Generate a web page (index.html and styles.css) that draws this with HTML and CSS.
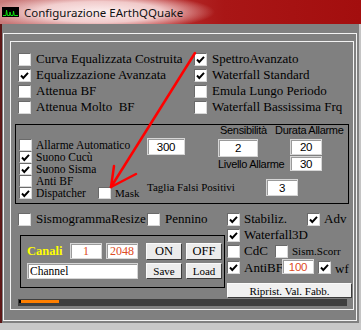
FILE: index.html
```html
<!DOCTYPE html>
<html lang="it">
<head>
  <meta charset="UTF-8">
  <meta name="viewport" content="width=device-width, initial-scale=1.0">
  <title>Configurazione EArthQQuake</title>
  <link rel="stylesheet" href="styles.css">
</head>
<body>
  <div class="window">
    <div class="titlebar">
      <svg class="app-icon" width="17" height="10" viewBox="0 0 17 10">
        <rect width="17" height="10" fill="#000"/>
        <polyline points="1,8.5 4,8.5 4.5,3 5.5,8.5 7.5,8.5 8,5 8.8,8.5 11,8.5 11.5,4 12.3,8.5 16,8.5" stroke="#10e010" stroke-width="1" fill="none"/>
      </svg>
      <span class="title">Configurazione EArthQQuake</span>
    </div>

    <div class="client">
      <div class="frame-outer">
        <div class="frame-inner">

          <!-- opzioni principali -->
          <div class="opts">
            <div class="chk"><span class="cb"></span>Curva Equalizzata Costruita</div>
            <div class="chk"><span class="cb on"><svg viewBox="0 0 11 11"><polyline points="2,5.5 4.3,8 9,2.8"/></svg></span>SpettroAvanzato</div>
            <div class="chk"><span class="cb on"><svg viewBox="0 0 11 11"><polyline points="2,5.5 4.3,8 9,2.8"/></svg></span>Equalizzazione Avanzata</div>
            <div class="chk"><span class="cb on"><svg viewBox="0 0 11 11"><polyline points="2,5.5 4.3,8 9,2.8"/></svg></span>Waterfall Standard</div>
            <div class="chk"><span class="cb"></span>Attenua BF</div>
            <div class="chk"><span class="cb"></span>Emula Lungo Periodo</div>
            <div class="chk"><span class="cb"></span>Attenua Molto&nbsp; BF</div>
            <div class="chk"><span class="cb"></span>Waterfall Bassissima Frq</div>
          </div>

          <!-- allarmi -->
          <div class="alarm">
            <div class="alarm-list">
              <div class="chk"><span class="cb"></span>Allarme Automatico</div>
              <div class="chk"><span class="cb on"><svg viewBox="0 0 11 11"><polyline points="2,5.5 4.3,8 9,2.8"/></svg></span>Suono Cucù</div>
              <div class="chk"><span class="cb on"><svg viewBox="0 0 11 11"><polyline points="2,5.5 4.3,8 9,2.8"/></svg></span>Suono Sisma</div>
              <div class="chk"><span class="cb"></span>Anti BF</div>
              <div class="chk">
                <span class="cb on"><svg viewBox="0 0 11 11"><polyline points="2,5.5 4.3,8 9,2.8"/></svg></span>
                <span class="dispatcher">Dispatcher</span>
                <span class="cb mask-cb"></span>
                <span class="mask">Mask</span>
              </div>
            </div>
            <div class="alarm-fields">
              <div class="af-row af-head">
                <span class="sens">Sensibilità</span>
                <span>Durata Allarme</span>
              </div>
              <div class="af-row af-main">
                <input class="field f300" type="text" value="300">
                <input class="field f2" type="text" value="2">
                <input class="field f20" type="text" value="20">
              </div>
              <div class="af-row af-liv">
                <span class="liv">Livello Allarme</span>
                <input class="field f30" type="text" value="30">
              </div>
              <div class="af-row af-taglia">
                <span class="taglia">Taglia Falsi Positivi</span>
                <input class="field f3" type="text" value="3">
              </div>
            </div>
          </div>

          <!-- parte bassa -->
          <div class="lower">
            <div class="lower-left">
              <div class="chk sismo">
                <span class="cb"></span>
                <span class="resize">SismogrammaResize</span>
                <span class="cb"></span>
                <span>Pennino</span>
              </div>
              <div class="canali">
                <div class="canali-row">
                  <span class="canali-lbl">Canali</span>
                  <input class="field red ch1" type="text" value="1">
                  <input class="field red ch2" type="text" value="2048">
                  <button class="btn on-btn">ON</button>
                  <button class="btn off-btn">OFF</button>
                </div>
                <div class="canali-row second">
                  <input class="field channel" type="text" value="Channel">
                  <button class="btn save-btn">Save</button>
                  <button class="btn load-btn">Load</button>
                </div>
              </div>
            </div>
            <div class="lower-right">
              <div class="chk">
                <span class="cb on"><svg viewBox="0 0 11 11"><polyline points="2,5.5 4.3,8 9,2.8"/></svg></span>
                <span class="stab">Stabiliz.</span>
                <span class="cb on"><svg viewBox="0 0 11 11"><polyline points="2,5.5 4.3,8 9,2.8"/></svg></span>
                <span>Adv</span>
              </div>
              <div class="chk">
                <span class="cb on"><svg viewBox="0 0 11 11"><polyline points="2,5.5 4.3,8 9,2.8"/></svg></span>
                <span>Waterfall3D</span>
              </div>
              <div class="chk">
                <span class="cb"></span>
                <span class="cdc">CdC</span>
                <span class="cb"></span>
                <span class="scorr">Sism.Scorr</span>
              </div>
              <div class="chk antibf-row">
                <span class="cb on"><svg viewBox="0 0 11 11"><polyline points="2,5.5 4.3,8 9,2.8"/></svg></span>
                <span class="antibf">AntiBF</span>
                <input class="field red f100" type="text" value="100">
                <span class="cb on"><svg viewBox="0 0 11 11"><polyline points="2,5.5 4.3,8 9,2.8"/></svg></span>
                <span>wf</span>
              </div>
              <button class="btn reset-btn">Riprist. Val. Fabb.</button>
            </div>
          </div>

          <div class="progress"><div class="progress-fill"></div></div>

        </div>
      </div>
    </div>

    <!-- freccia rossa sopra il form -->
    <svg class="arrow" width="361" height="330" viewBox="0 0 361 330">
      <g stroke="#ff0000" stroke-width="2.5" stroke-linecap="round" fill="none">
        <line x1="195" y1="53" x2="111" y2="187"/>
        <line x1="111" y1="187" x2="114" y2="166"/>
        <line x1="111" y1="187" x2="136" y2="174"/>
      </g>
    </svg>
  </div>
</body>
</html>
```

FILE: styles.css
```css
* {
  box-sizing: border-box;
}
body {
  margin: 0;
  width: 361px;
  height: 330px;
  overflow: hidden;
  background: #c8c8c8;
}
.window {
  position: relative;
  width: 361px;
  height: 330px;
  font-family: "Liberation Serif", "Times New Roman", serif;
  color: #000;
}

/* barra del titolo */
.titlebar {
  height: 24px;
  display: flex;
  align-items: center;
  gap: 5px;
  padding-left: 2px;
  background:
    radial-gradient(ellipse 115px 19px at 100px 12px, rgba(255, 246, 246, 0.96), rgba(250, 225, 225, 0.85) 55%, rgba(200, 60, 60, 0) 100%),
    linear-gradient(to right, #c87a7a, #b83030 45%, #a91616 62%, #a30e0e);
}
.app-icon {
  display: block;
}
.title {
  font-family: "Noto Sans", "Open Sans", sans-serif;
  font-size: 11.5px;
  color: #111;
}

/* area client */
.client {
  height: 299px;
  background: #808080;
  border-left: 2px solid #5c1616;
  border-right: 2px solid #c4c4c4;
  padding-top: 9px;
}
.frame-outer {
  margin-left: 1px;
  width: 354px;
  height: 288px;
  border: 1px solid #f2f2f2;
  padding: 7px 0 0 6px;
}
.frame-inner {
  width: 344px;
  height: 269px;
  border: 1px solid #f2f2f2;
}

/* checkbox */
.chk {
  display: flex;
  align-items: center;
  gap: 4px;
  white-space: nowrap;
}
.cb {
  flex: none;
  width: 13px;
  height: 13px;
  background: #fff;
  border: 1px solid;
  border-color: #6a6a6a #d8d8d8 #d8d8d8 #6a6a6a;
  display: flex;
  align-items: center;
  justify-content: center;
}
.cb svg {
  width: 11px;
  height: 11px;
  fill: none;
  stroke: #000;
  stroke-width: 1.9;
}

/* campi e pulsanti */
.field {
  margin: 0;
  padding: 0;
  border: 1px solid #d6d6d6;
  box-shadow: inset 1px 1px 0 #9a9a9a;
  background: #fff;
  text-align: center;
  font-family: "Liberation Sans", Arial, sans-serif;
  font-size: 11.5px;
  letter-spacing: -0.3px;
  color: #000;
  outline: none;
}
.field.red {
  color: #dd4c24;
}
.btn {
  margin: 0;
  padding: 0;
  background: #ececec;
  border: 1px solid;
  border-color: #fafafa #3c3c3c #3c3c3c #fafafa;
  font-family: "Liberation Serif", "Times New Roman", serif;
  font-size: 11px;
  color: #000;
}

/* opzioni principali */
.opts {
  margin: 9px 0 0 7px;
  display: grid;
  grid-template-columns: 176px auto;
  grid-auto-rows: 16px;
  font-size: 13px;
}
.opts .chk {
  gap: 5px;
}

/* gruppo allarmi */
.alarm {
  margin: 9px 0 0 4px;
  width: 334px;
  height: 80px;
  border: 1px solid #000;
  display: flex;
}
.alarm-list {
  width: 131px;
  padding: 14px 0 0 3px;
  font-size: 11.5px;
}
.alarm-list .chk {
  height: 12px;
}
.alarm-list .cb {
  height: 12px;
}
.dispatcher {
  width: 58px;
}
.mask {
  font-size: 11px;
}
.alarm-fields {
  width: 201px;
  font-family: "Liberation Sans", Arial, sans-serif;
  font-size: 11px;
  letter-spacing: -0.3px;
}
.af-row {
  display: flex;
  align-items: flex-start;
}
.af-head {
  height: 13px;
  line-height: 11px;
}
.sens {
  margin-left: 73px;
  width: 55px;
}
.af-main {
  height: 17px;
}
.f300 {
  width: 38px;
  height: 17px;
}
.f2 {
  margin: 1px 0 0 33px;
  width: 40px;
  height: 18px;
}
.f20 {
  margin: 1px 0 0 32px;
  width: 32px;
  height: 16px;
}
.af-liv {
  height: 17px;
}
.liv {
  margin-left: 71px;
  width: 72px;
  line-height: 17px;
  padding-top: 1px;
}
.f30 {
  margin-top: 1px;
  width: 32px;
  height: 15px;
}
.af-taglia {
  margin-top: 7px;
  height: 17px;
}
.taglia {
  width: 119px;
  line-height: 17px;
  font-family: "Liberation Serif", "Times New Roman", serif;
  letter-spacing: 0;
}
.f3 {
  width: 32px;
  height: 17px;
}

/* parte bassa */
.lower {
  margin-top: 7px;
  height: 87px;
  display: flex;
  font-size: 13px;
}
.lower-left {
  width: 216px;
}
.sismo {
  height: 16px;
  padding-left: 7px;
  gap: 5px;
}
.resize {
  width: 106px;
}
.canali {
  margin: 8px 0 0 9px;
  width: 205px;
  height: 53px;
  border: 1px solid #000;
  padding: 7px 0 0 6px;
}
.canali-row {
  display: flex;
  align-items: flex-start;
  height: 17px;
}
.canali-row.second {
  margin-top: 3px;
  height: 16px;
}
.canali-lbl {
  width: 43px;
  line-height: 17px;
  font-weight: bold;
  font-size: 12.5px;
  color: #ffff00;
}
.ch1,
.ch2 {
  width: 32px;
  height: 16px;
  font-family: "Liberation Serif", "Times New Roman", serif;
  font-size: 12px;
  letter-spacing: 0;
}
.ch2 {
  margin-left: 4px;
}
.on-btn,
.save-btn {
  margin-left: 8px;
}
.on-btn,
.off-btn {
  width: 36px;
  height: 17px;
  font-size: 12.5px;
}
.off-btn,
.load-btn {
  margin-left: 4px;
}
.save-btn,
.load-btn {
  width: 36px;
  height: 16px;
}
.channel {
  width: 111px;
  height: 16px;
  text-align: left;
  padding-left: 2px;
  font-family: "Liberation Serif", "Times New Roman", serif;
  font-size: 11.5px;
  letter-spacing: 0;
}
.lower-right {
  width: 126px;
}
.lower-right .chk {
  height: 16px;
}
.stab {
  width: 59px;
}
.cdc {
  width: 27px;
}
.scorr {
  font-size: 11px;
}
.antibf-row {
  align-items: flex-start;
}
.antibf-row .cb,
.antibf-row span {
  margin-top: 2px;
}
.antibf {
  width: 38px;
  margin-right: -4px;
  line-height: 13px;
}
.f100 {
  width: 32px;
  height: 15px;
}
.reset-btn {
  margin-top: 8px;
  width: 125px;
  height: 15px;
  background: #f0f0f0;
}

/* barra di avanzamento */
.progress {
  margin: 1px 0 0 7px;
  width: 329px;
  height: 7px;
  background: #3e3e3e;
  padding: 1px 0 0 1px;
}
.progress-fill {
  width: 40px;
  height: 3px;
  background: #ff7f00;
  border-left: 2px solid #000;
}

/* freccia */
.arrow {
  position: absolute;
  top: 0;
  left: 0;
  pointer-events: none;
}
```
